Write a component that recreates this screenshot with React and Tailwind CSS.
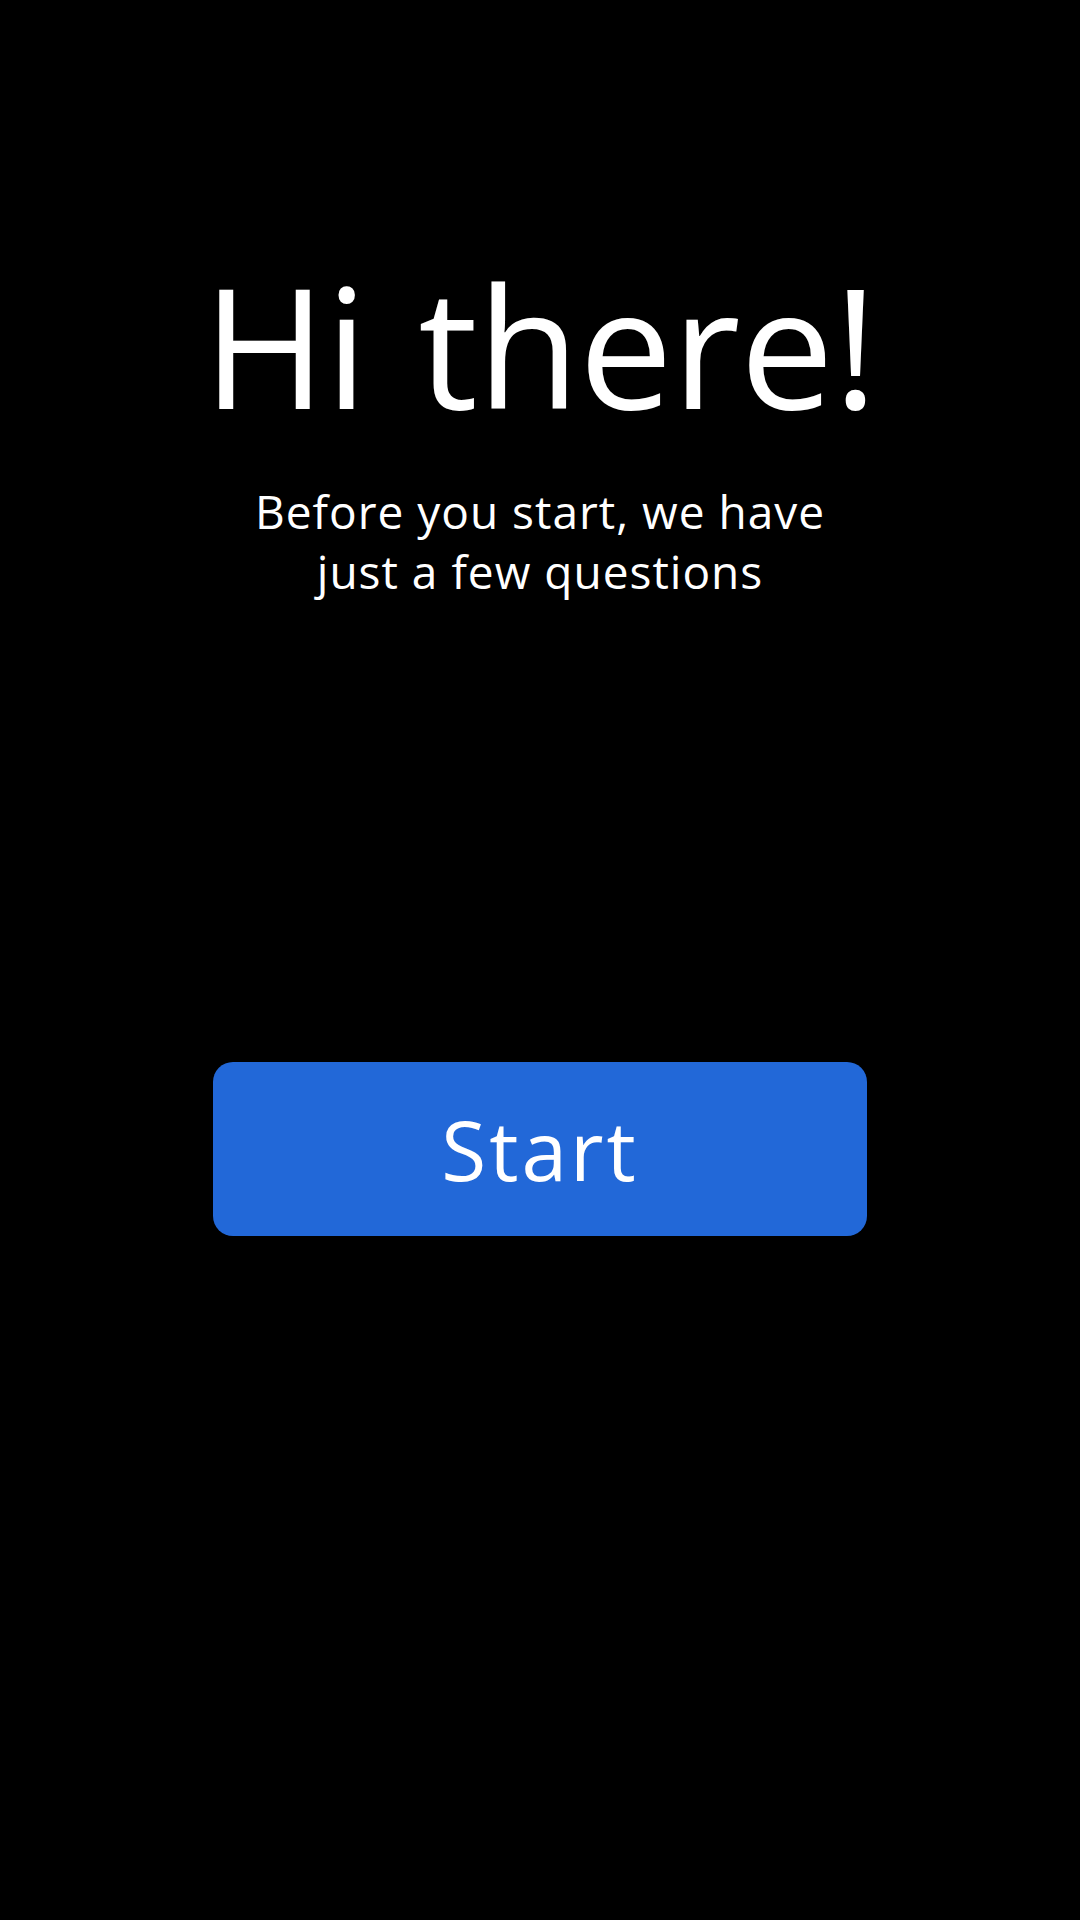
import React from 'react';

export default function App() {
    return (
        <div
            className="min-h-screen w-full bg-black text-white flex flex-col items-center"
            style={{ fontFamily: '"Open Sans", "Noto Sans", sans-serif' }}
        >
            {/* greeting */}
            <h1 className="mt-[261px] text-[167px] leading-none font-normal tracking-[-0.5px] [word-spacing:8px]">
                Hi there!
            </h1>
            <p className="mt-[53px] text-[46px] leading-[60px] text-center tracking-[1px]">
                Before you start, we have
                <br />
                just a few questions
            </p>

            {/* start button */}
            <button
                type="button"
                className="mt-[461px] w-[654px] h-[174px] rounded-[20px] bg-[#2268d8] text-white text-[82px] leading-none tracking-[3px]"
            >
                Start
            </button>
        </div>
    );
}
